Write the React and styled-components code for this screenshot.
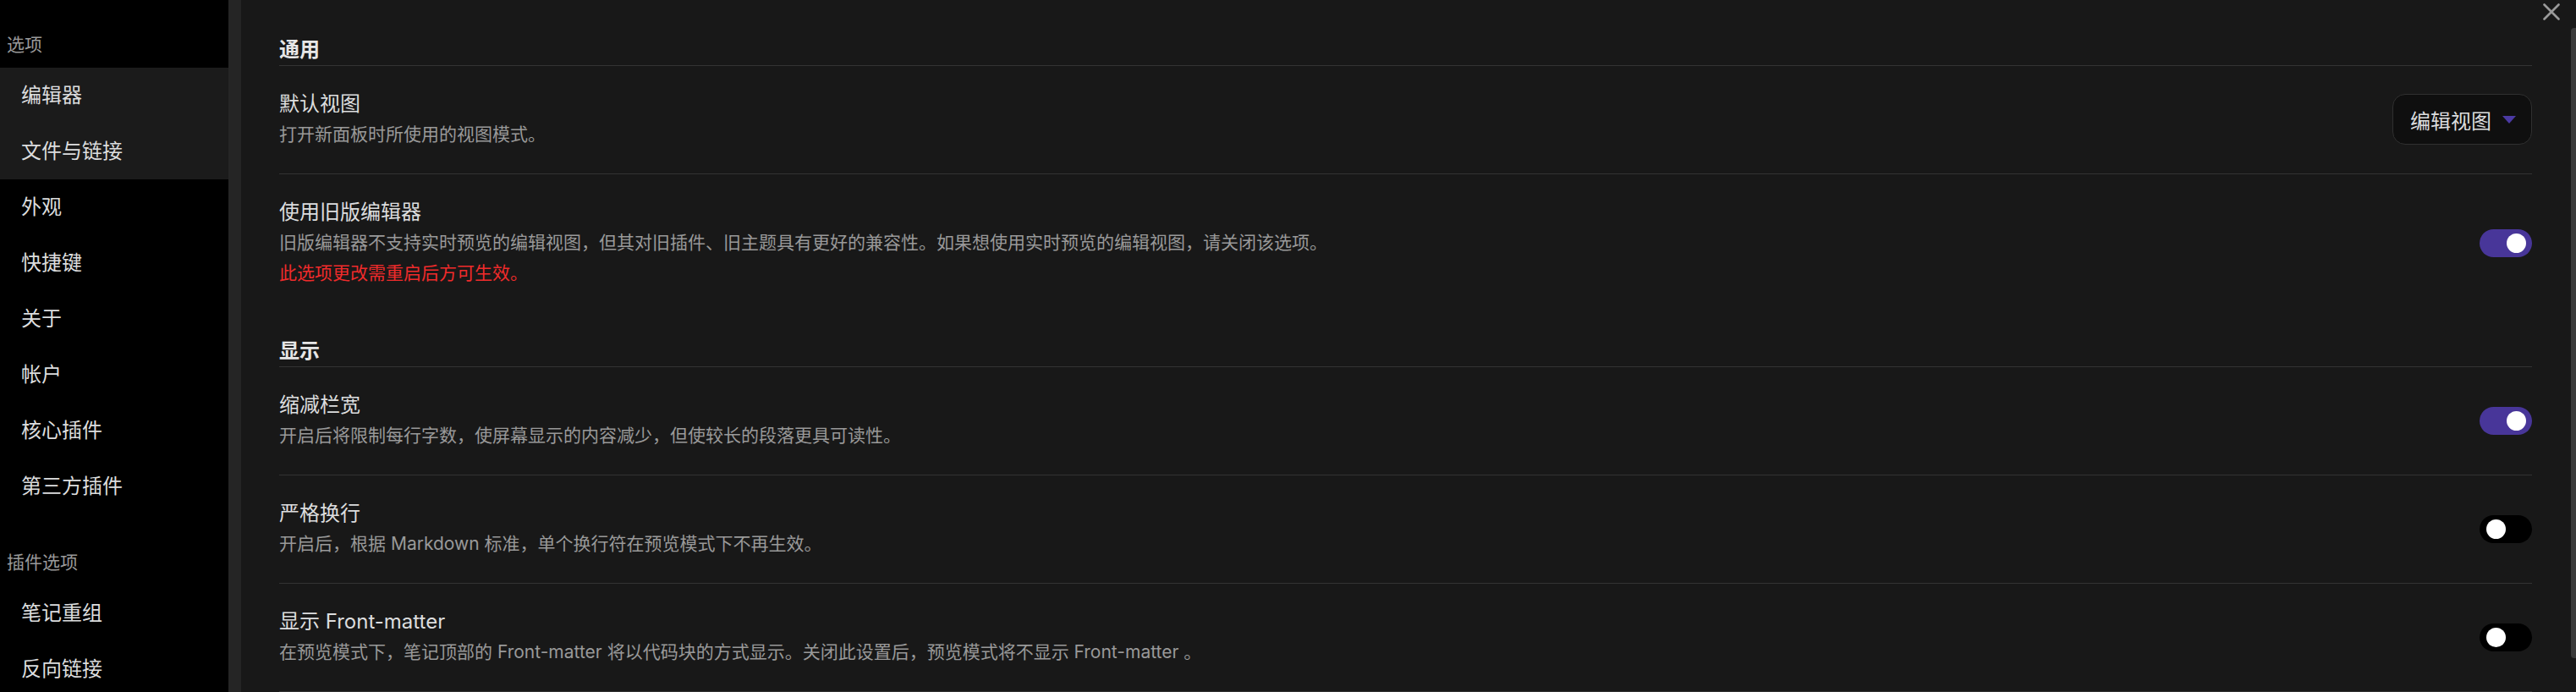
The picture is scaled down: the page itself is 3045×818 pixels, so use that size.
import React from "react";
import styled, { createGlobalStyle } from "styled-components";

const GlobalStyle = createGlobalStyle`
  html, body {
    margin: 0;
    padding: 0;
    height: 100%;
    overflow: hidden;
    background: #181818;
  }
  body {
    font-family: Inter, "Noto Sans CJK SC", sans-serif;
    color: #dcddde;
  }
`;

const navGroups = [
  {
    label: "选项",
    items: [
      { name: "编辑器", active: true },
      { name: "文件与链接", active: true },
      { name: "外观" },
      { name: "快捷键" },
      { name: "关于" },
      { name: "帐户" },
      { name: "核心插件" },
      { name: "第三方插件" },
    ],
  },
  {
    label: "插件选项",
    items: [{ name: "笔记重组" }, { name: "反向链接" }],
  },
];

const sections = [
  {
    title: "通用",
    items: [
      {
        name: "默认视图",
        desc: "打开新面板时所使用的视图模式。",
        control: "dropdown",
        value: "编辑视图",
      },
      {
        name: "使用旧版编辑器",
        desc: "旧版编辑器不支持实时预览的编辑视图，但其对旧插件、旧主题具有更好的兼容性。如果想使用实时预览的编辑视图，请关闭该选项。",
        warning: "此选项更改需重启后方可生效。",
        control: "toggle",
        on: true,
      },
    ],
  },
  {
    title: "显示",
    closed: true,
    items: [
      {
        name: "缩减栏宽",
        desc: "开启后将限制每行字数，使屏幕显示的内容减少，但使较长的段落更具可读性。",
        control: "toggle",
        on: true,
      },
      {
        name: "严格换行",
        desc: "开启后，根据 Markdown 标准，单个换行符在预览模式下不再生效。",
        control: "toggle",
        on: false,
      },
      {
        name: "显示 Front-matter",
        desc: "在预览模式下，笔记顶部的 Front-matter 将以代码块的方式显示。关闭此设置后，预览模式将不显示 Front-matter 。",
        control: "toggle",
        on: false,
      },
    ],
  },
];

const Toggle = ({ on }) => (
  <ToggleTrack $on={on}>
    <ToggleKnob $on={on} />
  </ToggleTrack>
);

const Dropdown = ({ value }) => (
  <Select>
    {value}
    <svg width="16" height="9" viewBox="0 0 16 9">
      <polygon points="0,0 16,0 8,9" fill="#4b3aa3" />
    </svg>
  </Select>
);

const App = () => {
  return (
    <>
      <GlobalStyle />
      <Modal>
        <Sidebar>
          {navGroups.map((group, gi) => (
            <NavGroup key={gi} $first={gi === 0}>
              <NavLabel>{group.label}</NavLabel>
              {group.items.map((item) => (
                <NavItem key={item.name} $active={item.active}>
                  {item.name}
                </NavItem>
              ))}
            </NavGroup>
          ))}
        </Sidebar>
        <Gutter />
        <Content>
          {sections.map((section, si) => (
            <Section key={section.title} $first={si === 0} $closed={section.closed}>
              <Heading>{section.title}</Heading>
              {section.items.map((item) => (
                <SettingItem key={item.name}>
                  <SettingInfo>
                    <SettingName>{item.name}</SettingName>
                    <SettingDesc>{item.desc}</SettingDesc>
                    {item.warning && <Warning>{item.warning}</Warning>}
                  </SettingInfo>
                  <SettingControl>
                    {item.control === "dropdown" ? (
                      <Dropdown value={item.value} />
                    ) : (
                      <Toggle on={item.on} />
                    )}
                  </SettingControl>
                </SettingItem>
              ))}
            </Section>
          ))}
          <CloseButton>
            <svg width="20" height="20" viewBox="0 0 20 20">
              <path d="M1.5 1.5 L18.5 18.5 M18.5 1.5 L1.5 18.5" stroke="#9a9a9a" strokeWidth="2.6" strokeLinecap="round" />
            </svg>
          </CloseButton>
          <ScrollThumb />
        </Content>
      </Modal>
    </>
  );
};

const Modal = styled.div`
  display: flex;
  height: 100vh;
  overflow: hidden;
`;

const Sidebar = styled.nav`
  width: 270px;
  flex-shrink: 0;
  background: #000;
  padding-top: 38px;
  box-sizing: border-box;
`;

const NavGroup = styled.div`
  margin-top: ${(p) => (p.$first ? "0" : "42px")};
`;

const NavLabel = styled.div`
  padding-left: 8px;
  height: 30px;
  line-height: 30px;
  margin-bottom: 12px;
  font-size: 21px;
  color: #999;
`;

const NavItem = styled.div`
  height: 66px;
  line-height: 66px;
  padding-left: 25px;
  font-size: 24px;
  color: #dcddde;
  background: ${(p) => (p.$active ? "#1b1b1b" : "transparent")};
`;

const Gutter = styled.div`
  width: 15px;
  flex-shrink: 0;
  background: #252525;
`;

const Content = styled.main`
  position: relative;
  flex: 1;
  background: #181818;
  padding: 41px 52px 0 45px;
  box-sizing: border-box;
`;

const Section = styled.section`
  margin-top: ${(p) => (p.$first ? "0" : "28px")};
  ${(p) =>
    p.$closed &&
    `
    & > div:last-child {
      border-bottom: 1px solid #333;
    }
  `}
`;

const Heading = styled.h3`
  margin: 0;
  font-size: 24px;
  line-height: 36px;
  font-weight: 700;
  color: #e6e6e6;
  border-bottom: 1px solid #333;
`;

const SettingItem = styled.div`
  display: flex;
  align-items: center;
  padding: 27px 0 28px;
  border-top: 1px solid #333;
  &:nth-child(2) {
    border-top: none;
  }
`;

const SettingInfo = styled.div`
  flex: 1;
`;

const SettingName = styled.div`
  font-size: 24px;
  line-height: 36px;
  color: #dcddde;
`;

const SettingDesc = styled.div`
  font-size: 21px;
  line-height: 36px;
  color: #999;
`;

const Warning = styled.div`
  font-size: 21px;
  line-height: 36px;
  color: #ef2b2b;
`;

const SettingControl = styled.div`
  display: flex;
  align-items: center;
  margin-left: 24px;
`;

const ToggleTrack = styled.div`
  position: relative;
  width: 62px;
  height: 33px;
  border-radius: 17px;
  background: ${(p) => (p.$on ? "#483699" : "#000")};
`;

const ToggleKnob = styled.div`
  position: absolute;
  top: 5px;
  left: ${(p) => (p.$on ? "32px" : "8px")};
  width: 23px;
  height: 23px;
  border-radius: 50%;
  background: #fff;
`;

const Select = styled.div`
  display: flex;
  align-items: center;
  gap: 13px;
  height: 60px;
  padding: 0 18px 0 20px;
  box-sizing: border-box;
  border: 1px solid #303030;
  border-radius: 15px;
  background: #0f0f0f;
  font-size: 24px;
  color: #dcddde;
`;

const CloseButton = styled.div`
  position: absolute;
  top: 4px;
  right: 19px;
  width: 20px;
  height: 20px;
  display: flex;
`;

const ScrollThumb = styled.div`
  position: absolute;
  top: 33px;
  right: 0;
  width: 6px;
  height: 745px;
  border-radius: 4px 0 0 4px;
  background: #3a3a3a;
`;

export default App;
